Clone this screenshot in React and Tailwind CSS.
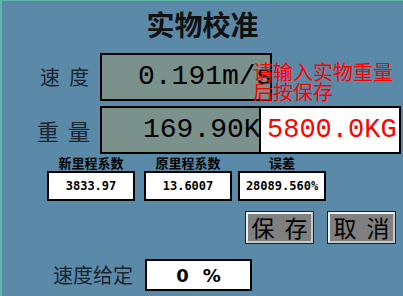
import React from 'react';

const cjk = { fontFamily: '"Noto Sans CJK SC", "Noto Sans", sans-serif' };
const mono = { fontFamily: '"Liberation Mono", "DejaVu Sans Mono", monospace' };

// small read-only value box with a caption above it
const SmallField = ({ label, value, className }) => (
    <div className={`flex flex-col items-center ${className}`}>
        <div className="h-[17px] text-[13px] leading-[17px] font-bold text-black whitespace-nowrap" style={cjk}>{label}</div>
        <div
            className="w-[88px] h-[30px] bg-white border-2 border-black flex items-center justify-center text-[12px] font-bold text-black"
            style={{ fontFamily: '"DejaVu Sans Mono", monospace' }}
        >
            {value}
        </div>
    </div>
);

// bevelled grey button, two characters spaced apart
const PanelButton = ({ chars }) => (
    <div className="w-[69px] h-[33px] border border-[#202020] bg-[#808080]">
        <div className="w-full h-full border-2 border-t-[#f0f0f0] border-l-[#f0f0f0] border-r-[#c8c8c8] border-b-[#c8c8c8] flex items-center justify-center gap-[10px] text-[23px] leading-none text-black" style={cjk}>
            <span>{chars[0]}</span>
            <span>{chars[1]}</span>
        </div>
    </div>
);

const App = () => {
    return (
        <div className="w-[403px] h-[296px] bg-[#5a8aa8] border-l-2 border-t border-[#5fb5a8] overflow-hidden flex flex-col">
            {/* Title */}
            <div className="h-[52px] pt-[7px] text-center text-[28px] leading-[32px] font-bold text-[#111]" style={cjk}>
                实物校准
            </div>

            {/* Speed */}
            <div className="flex items-start h-[48px]">
                <div className="w-[98px] shrink-0 h-full flex items-center gap-[9px] pl-[38px] text-[20px] text-[#1c2430] whitespace-nowrap" style={cjk}>
                    <span>速</span><span>度</span>
                </div>
                <div className="w-[172px] shrink-0 h-[48px] bg-[#7b918c] border-2 border-black flex items-center pl-[36px] overflow-hidden">
                    <span className="text-[28px] text-black whitespace-nowrap" style={mono}>0.191m/s</span>
                </div>
                <div className="relative z-10 ml-[-19px] mt-[9px] text-[20px] leading-[20px] text-[#ff0000] whitespace-nowrap" style={cjk}>
                    <div>请输入实物重量</div>
                    <div>后按保存</div>
                </div>
            </div>

            {/* Weight */}
            <div className="flex items-center h-[48px] mt-[5px]">
                <div className="w-[98px] shrink-0 h-full flex items-center gap-[9px] pl-[35px] text-[22px] text-[#1c2430] whitespace-nowrap" style={cjk}>
                    <span>重</span><span>量</span>
                </div>
                <div className="w-[172px] shrink-0 h-[48px] bg-[#7b918c] border-2 border-black flex items-center pl-[41px] overflow-hidden">
                    <span className="text-[28px] text-black whitespace-nowrap" style={mono}>169.90KG</span>
                </div>
                <div className="relative z-10 ml-[-13px] w-[142px] shrink-0 h-[48px] bg-white border-2 border-black flex items-center pl-[6px]">
                    <span className="text-[27px] text-[#ff0000] whitespace-nowrap" style={mono}>5800.0KG</span>
                </div>
            </div>

            {/* Coefficients */}
            <div className="flex">
                <SmallField label="新里程系数" value="3833.97" className="ml-[45px]" />
                <SmallField label="原里程系数" value="13.6007" className="ml-[9px]" />
                <SmallField label="误差" value="28089.560%" className="ml-[6px]" />
            </div>

            {/* Buttons */}
            <div className="flex justify-end gap-[13px] pr-[7px] mt-[10px]">
                <PanelButton chars="保存" />
                <PanelButton chars="取消" />
            </div>

            {/* Speed setpoint */}
            <div className="flex items-center mt-[15px]">
                <div className="w-[143px] shrink-0 pl-[51px] text-[20px] text-[#1c2430] whitespace-nowrap" style={cjk}>速度给定</div>
                <div className="w-[107px] h-[32px] bg-white border-2 border-black flex items-center justify-center gap-[14px] text-[18px] font-bold text-black" style={{ fontFamily: '"DejaVu Sans", sans-serif' }}>
                    <span>0</span><span>%</span>
                </div>
            </div>
        </div>
    );
};

export default App;
